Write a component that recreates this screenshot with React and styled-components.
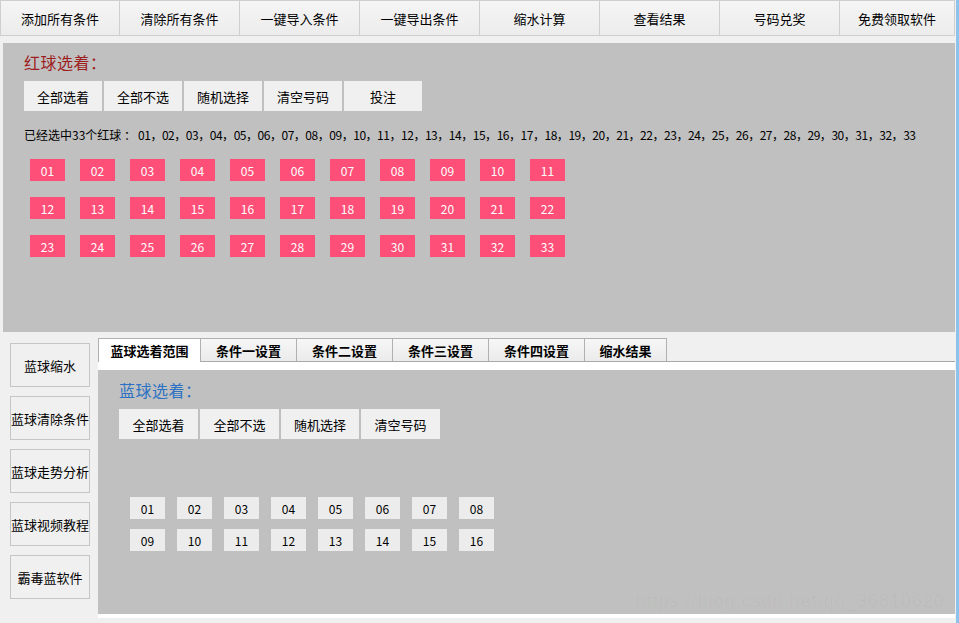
import React from "react"
import styled, { createGlobalStyle } from "styled-components"

const GlobalStyle = createGlobalStyle`
    html, body {
        margin: 0;
        padding: 0;
        background: #f0f0f0;
    }
    body {
        font-family: "Noto Sans CJK SC", "Noto Sans", sans-serif;
        font-size: 13px;
        color: #000;
    }
`

const topMenu = ['添加所有条件', '清除所有条件', '一键导入条件', '一键导出条件', '缩水计算', '查看结果', '号码兑奖', '免费领取软件']
const redActions = ['全部选着', '全部不选', '随机选择', '清空号码', '投注']
const blueActions = ['全部选着', '全部不选', '随机选择', '清空号码']
const sideMenu = ['蓝球缩水', '蓝球清除条件', '蓝球走势分析', '蓝球视频教程', '霸毒蓝软件']
const tabs = ['蓝球选着范围', '条件一设置', '条件二设置', '条件三设置', '条件四设置', '缩水结果']
const tabWidths = [103, 96, 96, 96, 96, 82]

const pad = (n) => String(n).padStart(2, '0')
const redBalls = Array.from({ length: 33 }, (_, i) => pad(i + 1))
const blueBalls = Array.from({ length: 16 }, (_, i) => pad(i + 1))

const Window = styled.div`
    width: 956px;
    height: 623px;
    border-right: 3px solid #8cc3ec;
    background: #f0f0f0;
    display: flex;
    flex-direction: column;
    overflow: hidden;
`

const Toolbar = styled.div`
    display: flex;
    height: 36px;
    padding-right: 1px;
`

const MenuButton = styled.div`
    flex: 0 0 ${(p) => p.$w}px;
    box-sizing: border-box;
    height: 36px;
    display: flex;
    align-items: center;
    justify-content: center;
    background: linear-gradient(#f5f5f5, #ececec);
    border: 1px solid #cfcfcf;
    border-left-width: ${(p) => (p.$first ? 1 : 0)}px;
    font-size: 13px;
`

const RedPanel = styled.div`
    margin: 7px 1px 0 3px;
    height: 289px;
    box-sizing: border-box;
    background: #c0c0c0;
    padding: 8px 0 0 21px;
`

const Title = styled.div`
    height: 22px;
    line-height: 22px;
    font-size: 16px;
    color: ${(p) => p.$color};
    margin-bottom: 8px;
    letter-spacing: 0.5px;
`

const ActionRow = styled.div`
    display: flex;
    gap: 2px;
`

const ActionButton = styled.div`
    width: ${(p) => p.$w || 78}px;
    height: 30px;
    display: flex;
    align-items: center;
    justify-content: center;
    background: #f0f0f0;
    font-size: 13px;
`

const Picked = styled.div`
    margin-top: 16px;
    height: 16px;
    line-height: 16px;
    font-size: 12px;
    white-space: nowrap;
    display: flex;
`

const PickedLabel = styled.span`
    width: 114px;
`

const PickedList = styled.span`
    letter-spacing: -0.47px;
`

const BallGrid = styled.div`
    display: grid;
    grid-template-columns: repeat(${(p) => p.$cols}, 35px);
    column-gap: ${(p) => p.$gap}px;
    row-gap: ${(p) => p.$rowGap}px;
    margin: ${(p) => p.$margin};
`

const Ball = styled.div`
    height: 22px;
    display: flex;
    align-items: center;
    justify-content: center;
    font-size: 12px;
    background: ${(p) => (p.$red ? '#fe4f78' : '#ececec')};
    color: ${(p) => (p.$red ? '#fff' : '#000')};
`

const Lower = styled.div`
    display: flex;
    flex: 1;
    margin-right: 1px;
`

const Sidebar = styled.div`
    width: 98px;
    box-sizing: border-box;
    padding: 11px 0 0 10px;
    display: flex;
    flex-direction: column;
    gap: 9px;
`

const SideButton = styled.div`
    width: 80px;
    height: 44px;
    box-sizing: border-box;
    border: 1px solid #c6c6c6;
    background: #f0f0f0;
    display: flex;
    align-items: center;
    justify-content: center;
    font-size: 13px;
    white-space: nowrap;
`

const Main = styled.div`
    flex: 1;
    display: flex;
    flex-direction: column;
`

const TabRow = styled.div`
    margin-top: 6px;
    height: 23px;
    display: flex;
    align-items: flex-start;
    border-bottom: 1px solid #a8a8a8;
`

const Tab = styled.div`
    width: ${(p) => p.$w}px;
    height: ${(p) => (p.$active ? 24 : 23)}px;
    box-sizing: border-box;
    border: 1px solid #b0b0b0;
    border-bottom: none;
    border-left-width: ${(p) => (p.$first ? 1 : 0)}px;
    background: ${(p) => (p.$active ? '#fff' : 'linear-gradient(#f6f6f6, #ebebeb)')};
    display: flex;
    align-items: center;
    justify-content: center;
    font-size: 13px;
    font-weight: bold;
    position: relative;
`

const WhiteBand = styled.div`
    height: ${(p) => p.$h}px;
    background: #fff;
`

const BluePanel = styled.div`
    position: relative;
    height: 244px;
    box-sizing: border-box;
    background: #c0c0c0;
    padding: 9px 0 0 21px;
`

const Watermark = styled.div`
    position: absolute;
    right: 10px;
    bottom: 2px;
    font-size: 18px;
    color: rgba(0, 0, 0, 0.03);
    font-family: "Liberation Sans", sans-serif;
    letter-spacing: 1px;
`

export default function App() {
    return (
        <>
            <GlobalStyle />
            <Window>
                <Toolbar>
                    {topMenu.map((text, i) => (
                        <MenuButton key={text} $w={i === topMenu.length - 1 ? 115 : 120} $first={i === 0}>
                            {text}
                        </MenuButton>
                    ))}
                </Toolbar>

                <RedPanel>
                    <Title $color="#9e1d1d">红球选着：</Title>
                    <ActionRow>
                        {redActions.map((text) => (
                            <ActionButton key={text}>{text}</ActionButton>
                        ))}
                    </ActionRow>
                    <Picked>
                        <PickedLabel>已经选中33个红球 ：</PickedLabel>
                        <PickedList>{redBalls.join('，')}</PickedList>
                    </Picked>
                    <BallGrid $cols={11} $gap={15} $rowGap={16} $margin="16px 0 0 6px">
                        {redBalls.map((n) => (
                            <Ball key={n} $red>{n}</Ball>
                        ))}
                    </BallGrid>
                </RedPanel>

                <Lower>
                    <Sidebar>
                        {sideMenu.map((text) => (
                            <SideButton key={text}>{text}</SideButton>
                        ))}
                    </Sidebar>
                    <Main>
                        <TabRow>
                            {tabs.map((text, i) => (
                                <Tab key={text} $w={tabWidths[i]} $active={i === 0} $first={i === 0}>
                                    {text}
                                </Tab>
                            ))}
                        </TabRow>
                        <WhiteBand $h={8} />
                        <BluePanel>
                            <Title $color="#2c72c4">蓝球选着：</Title>
                            <ActionRow>
                                {blueActions.map((text, i) => (
                                    <ActionButton key={text} $w={i === 2 ? 78 : 79}>{text}</ActionButton>
                                ))}
                            </ActionRow>
                            <BallGrid $cols={8} $gap={12} $rowGap={10} $margin="58px 0 0 11px">
                                {blueBalls.map((n) => (
                                    <Ball key={n}>{n}</Ball>
                                ))}
                            </BallGrid>
                            <Watermark>https://blog.csdn.net/qq_36810620</Watermark>
                        </BluePanel>
                        <WhiteBand $h={4} />
                    </Main>
                </Lower>
            </Window>
        </>
    )
}
